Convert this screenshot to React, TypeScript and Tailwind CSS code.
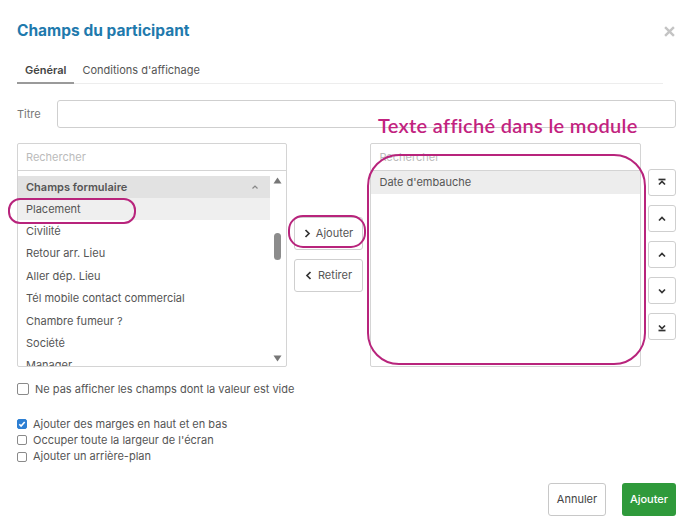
import React from "react";

const LEFT_ITEMS = [
  "Civilité",
  "Retour arr. Lieu",
  "Aller dép. Lieu",
  "Tél mobile contact commercial",
  "Chambre fumeur ?",
  "Société",
  "Manager",
];

function Chevron({ dir, bar }: { dir: "up" | "down"; bar?: "top" | "bottom" }) {
  return (
    <svg width="10" height="10" viewBox="0 0 10 10" fill="none" stroke="#333" strokeWidth="1.7">
      {bar === "top" && <path d="M1.5 1.5h7" />}
      {dir === "up" ? <path d="M2 6.5l3-3 3 3" /> : <path d="M2 3.5l3 3 3-3" />}
      {bar === "bottom" && <path d="M1.5 8.5h7" />}
    </svg>
  );
}

function Check({ checked, big }: { checked?: boolean; big?: boolean }) {
  return (
    <span
      className={`flex items-center justify-center rounded-[2px] border ${
        big ? "w-[12px] h-[12px]" : "w-[10px] h-[10px]"
      } ${checked ? "bg-[#2d7fd3] border-[#2d7fd3]" : "bg-white border-[#8a8a8a]"}`}
    >
      {checked && (
        <svg width="8" height="8" viewBox="0 0 8 8" fill="none" stroke="white" strokeWidth="1.6">
          <path d="M1.3 4.2l1.8 1.8 3.6-4" />
        </svg>
      )}
    </span>
  );
}

export default function App() {
  return (
    <div
      className="relative w-[691px] h-[531px] bg-white overflow-hidden pl-[17px] pr-[15px] text-[11px] text-[#555]"
      style={{ fontFamily: "Inter, 'Noto Sans', sans-serif" }}
    >
      {/* Header */}
      <div className="flex items-center justify-between pt-[21px] h-[41px]">
        <h1 className="text-[15.5px] font-bold text-[#1f7aad] leading-[20px]">Champs du participant</h1>
        <svg width="11" height="11" viewBox="0 0 10 10" stroke="#c4c4c4" strokeWidth="2.2" className="mr-[1px] mt-[1px]">
          <path d="M1 1l8 8M9 1l-8 8" />
        </svg>
      </div>

      {/* Tabs */}
      <div className="mt-[20px] mr-[13px] flex border-b border-[#ededed] h-[23px]">
        <div className="px-[8px] font-semibold text-[#444] border-b-2 border-[#9a9a9a] -mb-[1px] leading-[18px]">Général</div>
        <div className="px-[8px] text-[#555] leading-[18px]">Conditions d'affichage</div>
      </div>

      {/* Titre */}
      <div className="mt-[16px] flex items-center h-[28px]">
        <span className="w-[40px] text-[#777]">Titre</span>
        <div className="flex-1 h-[28px] border border-[#cfcfcf] rounded-[3px]" />
      </div>

      {/* Lists */}
      <div className="mt-[15px] flex h-[224px]">
        {/* Left list */}
        <div className="w-[270px] border border-[#d4d4d4] rounded-[2px] flex flex-col overflow-hidden">
          <div className="h-[27px] border-b border-[#d4d4d4] px-[8px] flex items-center text-[#bbb]">Rechercher</div>
          <div className="flex flex-1 overflow-hidden">
            <div className="flex-1 pt-[5px] overflow-hidden">
              <div className="h-[22px] bg-[#e2e2e2] px-[8px] flex items-center justify-between font-semibold text-[#555]">
                <span>Champs formulaire</span>
                <svg width="8" height="6" viewBox="0 0 8 6" fill="none" stroke="#888" strokeWidth="1.2" className="mr-[3px]">
                  <path d="M1.5 4.5l2.5-2.5 2.5 2.5" />
                </svg>
              </div>
              <div className="h-[22px] bg-[#efefef] px-[8px] flex items-center">Placement</div>
              {LEFT_ITEMS.map((item) => (
                <div key={item} className="h-[22.4px] px-[8px] flex items-center">
                  {item}
                </div>
              ))}
            </div>
            <div className="w-[16px] flex flex-col items-center justify-between pt-[6px] pb-[4px]">
              <svg width="9" height="7" viewBox="0 0 9 7" fill="#777">
                <path d="M4.5 0.5L8.5 6.5H0.5Z" />
              </svg>
              <div className="w-[7px] h-[27px] rounded-full bg-[#8c8c8c] -mt-[46px]" />
              <svg width="9" height="7" viewBox="0 0 9 7" fill="#777">
                <path d="M0.5 0.5H8.5L4.5 6.5Z" />
              </svg>
            </div>
          </div>
        </div>

        {/* Middle buttons */}
        <div className="ml-[7px] w-[70px] flex flex-col gap-[9px] pt-[74px]">
          <button className="h-[33px] border border-[#cfcfcf] rounded-[3px] flex items-center justify-center gap-[5px] text-[#555] bg-white">
            <svg width="7" height="9" viewBox="0 0 7 9" fill="none" stroke="#333" strokeWidth="1.7">
              <path d="M1.5 1l3.5 3.5-3.5 3.5" />
            </svg>
            Ajouter
          </button>
          <button className="h-[33px] border border-[#cfcfcf] rounded-[3px] flex items-center justify-center gap-[6px] text-[#555] bg-white">
            <svg width="7" height="9" viewBox="0 0 7 9" fill="none" stroke="#333" strokeWidth="1.7">
              <path d="M5.5 1L2 4.5 5.5 8" />
            </svg>
            Retirer
          </button>
        </div>

        {/* Right list */}
        <div className="ml-[7px] w-[271px] border border-[#d4d4d4] rounded-[2px] flex flex-col overflow-hidden">
          <div className="h-[27px] border-b border-[#d4d4d4] px-[8px] flex items-center text-[#bbb]">Rechercher</div>
          <div className="h-[23px] bg-[#ededed] px-[8px] flex items-center">Date d'embauche</div>
        </div>

        {/* Order buttons */}
        <div className="ml-[7px] w-[28px] flex flex-col gap-[9px] pt-[26px]">
          {[
            { dir: "up" as const, bar: "top" as const },
            { dir: "up" as const },
            { dir: "up" as const },
            { dir: "down" as const },
            { dir: "down" as const, bar: "bottom" as const },
          ].map((b, i) => (
            <button
              key={i}
              className="h-[27px] w-[28px] border border-[#cfcfcf] rounded-[3px] flex items-center justify-center bg-white"
            >
              <Chevron dir={b.dir} bar={b.bar} />
            </button>
          ))}
        </div>
      </div>

      {/* Checkboxes */}
      <div className="mt-[15px] flex items-center gap-[6px] h-[14px]">
        <Check big />
        <span>Ne pas afficher les champs dont la valeur est vide</span>
      </div>
      <div className="mt-[20px] flex flex-col">
        <div className="flex items-center gap-[6px] h-[16px]">
          <Check checked />
          <span>Ajouter des marges en haut et en bas</span>
        </div>
        <div className="flex items-center gap-[6px] h-[16.5px]">
          <Check />
          <span>Occuper toute la largeur de l'écran</span>
        </div>
        <div className="flex items-center gap-[6px] h-[16px]">
          <Check />
          <span>Ajouter un arrière-plan</span>
        </div>
      </div>

      {/* Footer */}
      <div className="mt-[18px] flex justify-end gap-[16px]">
        <button className="h-[33px] w-[58px] border border-[#c8c8c8] rounded-[3px] text-[#444] bg-white">Annuler</button>
        <button className="h-[33px] w-[54px] rounded-[3px] bg-[#2f9a3b] text-white font-medium">Ajouter</button>
      </div>

      {/* Annotations */}
      <div
        className="absolute left-[378px] top-[112px] text-[20px] tracking-[0.3px] font-semibold text-[#c2237f] leading-[26px]"
        style={{ fontFamily: "Lato, sans-serif" }}
      >
        Texte affiché dans le module
      </div>
      <div className="absolute left-[8px] top-[198px] w-[128px] h-[26px] rounded-[12px] border-2 border-[#b8247c]" />
      <div className="absolute left-[288px] top-[215px] w-[78px] h-[33px] rounded-[15px] border-2 border-[#b8247c]" />
      <div className="absolute left-[367px] top-[154px] w-[279px] h-[211px] rounded-[32px] border-2 border-[#b8247c]" />
    </div>
  );
}
